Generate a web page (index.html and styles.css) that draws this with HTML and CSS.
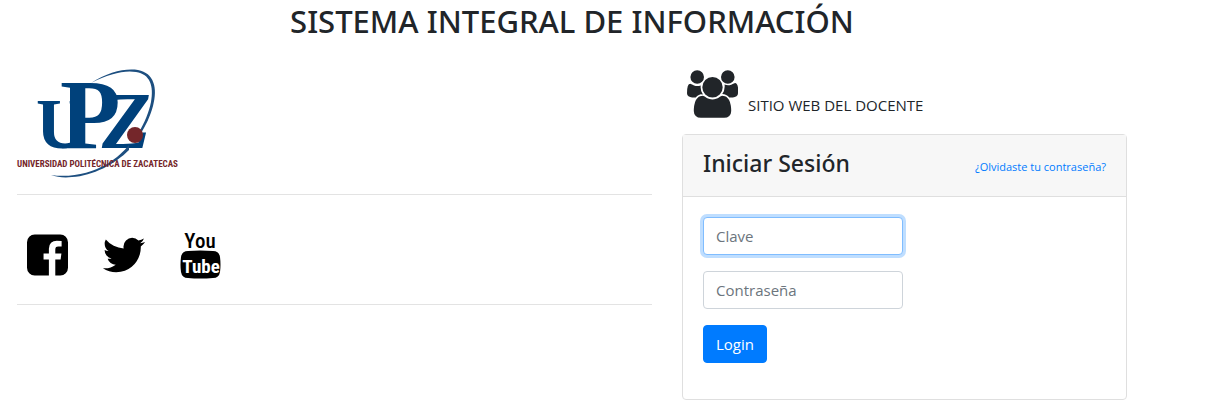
FILE: index.html
```html
<!DOCTYPE html>
<html lang="es">
<head>
  <meta charset="UTF-8">
  <meta name="viewport" content="width=device-width, initial-scale=1.0">
  <title>Sistema Integral de Información</title>
  <link rel="stylesheet" href="styles.css">
</head>
<body>
  <div class="container">
    <h2 class="title">SISTEMA INTEGRAL DE INFORMACIÓN</h2>
    <div class="row">
      <div class="col-left">
        <svg class="logo" viewBox="0 0 160 112" role="img" aria-label="Universidad Politécnica de Zacatecas">
          <g class="logo-letters">
            <text x="19" y="80" font-size="71">U</text>
            <path class="logo-gap" d="M60 20H90V76H60Z"/>
            <text x="43" y="80" font-size="99">P</text>
            <text x="85" y="80" font-size="80" font-style="italic">Z</text>
          </g>
          <path class="logo-orbit" d="M74 15C91 4 108 0 121 2C137 5 141 20 136 38C133 49 129 57 123 67L121 66C128 54 132 44 134 34C137 18 133 6 119 4C107 2 92 6 74 15Z"/>
          <path class="logo-orbit" d="M112 82C98 96 76 108 55 109C47 110 40 109 34 107C54 110 74 105 90 96C100 90 107 83 112 77Z"/>
          <circle class="logo-dot" cx="118" cy="67" r="8"/>
          <text class="logo-name" x="0" y="99">UNIVERSIDAD POLITÉCNICA DE ZACATECAS</text>
        </svg>
        <hr>
        <div class="social">
          <a href="#" aria-label="Facebook">
            <svg width="41" height="48" viewBox="0 0 1536 1792"><path d="M1248 128q119 0 203.500 84.500t84.500 203.500v960q0 119-84.500 203.500t-203.500 84.500h-188v-595h199l30-232h-229v-148q0-56 23.500-84t91.500-28l122-1v-207q-63-9-178-9-136 0-217.500 80t-81.500 226v171h-200v232h200v595h-532q-119 0-203.500-84.500t-84.500-203.500v-960q0-119 84.500-203.500t203.500-84.500h960z"/></svg>
          </a>
          <a href="#" aria-label="Twitter">
            <svg width="48" height="48" viewBox="0 0 1792 1792"><path d="M1684 408q-67 98-162 167 1 14 1 42 0 130-38 259.500t-115.500 248.500-184.500 210.500-258 146-323 54.500q-271 0-496-145 35 4 78 4 225 0 401-138-105-2-188-64.500t-114-159.500q33 5 61 5 43 0 85-11-112-23-185.500-111.500t-73.500-205.500v-4q68 38 146 41-66-44-105-115t-39-154q0-88 44-163 121 149 294.500 238.500t371.500 99.500q-8-38-8-74 0-134 94.500-228.500t228.500-94.500q140 0 236 102 109-21 205-78-37 115-142 178 93-10 186-50z"/></svg>
          </a>
          <a href="#" aria-label="YouTube">
            <svg class="youtube" width="41" height="48" viewBox="0 0 41 48">
              <text class="yt-you" x="20" y="17">You</text>
              <path d="M8 20Q20 19 33 20Q39 20 40 26Q41 34 40 41Q39 47 33 47Q20 48 8 47Q2 47 1 41Q0 34 1 26Q2 20 8 20Z"/>
              <text class="yt-tube" x="21" y="42">Tube</text>
            </svg>
          </a>
        </div>
        <hr>
      </div>
      <div class="col-right">
        <div class="site">
          <svg width="51" height="48" viewBox="0 0 1920 1792" aria-hidden="true"><path d="M593 896q-162 5-265 128h-134q-82 0-138-40.500t-56-118.500q0-353 124-353 6 0 43.500 21t97.500 42.500 119 21.500q67 0 133-23-5 37-5 66 0 159 92 287zm1071 637q0 120-73 189.500t-194 69.500h-874q-121 0-194-69.500t-73-189.500q0-53 3.500-103.500t14-109 26.500-108.500 43-97.500 62-81 85.500-53.500 111.500-20q10 0 43 21.500t73 48 107 48 135 21.500 135-21.500 107-48 73-48 43-21.500q61 0 111.500 20t85.500 53.500 62 81 43 97.500 26.500 108.500 14 109 3.500 103.500zm-1024-1277q0 106-75 181t-181 75-181-75-75-181 75-181 181-75 181 75 75 181zm704 384q0 159-112.500 271.500t-271.500 112.500-271.500-112.500-112.500-271.500 112.500-271.500 271.500-112.500 271.500 112.500 112.500 271.500zm576 225q0 78-56 118.500t-138 40.500h-134q-103-123-265-128 92-128 92-287 0-29-5-66 66 23 133 23 59 0 119-21.500t97.500-42.500 43.500-21q124 0 124 353zm-128-609q0 106-75 181t-181 75-181-75-75-181 75-181 181-75 181 75 75 181z"/></svg>
          <span>SITIO WEB DEL DOCENTE</span>
        </div>
        <div class="card">
          <div class="card-header">
            <h4>Iniciar Sesión</h4>
            <a href="#">¿Olvidaste tu contraseña?</a>
          </div>
          <form class="card-body">
            <input type="text" class="form-control" name="clave" placeholder="Clave" aria-label="Clave" autofocus>
            <input type="password" class="form-control" name="password" placeholder="Contraseña" aria-label="Contraseña">
            <button type="submit" class="btn">Login</button>
          </form>
        </div>
      </div>
    </div>
  </div>
</body>
</html>
```
FILE: styles.css
```css
* {
  box-sizing: border-box;
}
body {
  margin: 0;
  padding: 0 2px;
  font-family: "Segoe UI", "Open Sans", "Noto Sans", sans-serif;
  font-size: 15px;
  line-height: 24px;
  color: #212529;
  background: #fff;
}
.container {
  max-width: 1140px;
}
.title,
.card-header h4 {
  font-family: "Segoe UI", "Noto Sans", sans-serif;
  font-weight: 500;
}
.title {
  margin: 0 0 28px;
  padding-top: 2px;
  font-size: 31px;
  line-height: 38px;
  text-align: center;
}
.row {
  display: grid;
  grid-template-columns: 7fr 5fr;
}
.col-left,
.col-right {
  padding: 0 15px;
}
.logo {
  display: block;
  width: 160px;
  height: 112px;
  overflow: visible;
}
.logo-letters {
  fill: #00417b;
  font-family: "Liberation Serif", serif;
  font-weight: bold;
}
.logo-gap {
  fill: #fff;
}
.logo-orbit {
  fill: #1d4f80;
}
.logo-dot {
  fill: #74262a;
}
.logo-name {
  fill: #74262a;
  font-family: "Roboto Condensed", "Liberation Sans", sans-serif;
  font-size: 9px;
  font-weight: bold;
}
hr {
  margin: 14px 0 0;
  border: 0;
  border-top: 1px solid #e3e3e3;
}
.social {
  display: flex;
  align-items: center;
  gap: 32px;
  padding: 36px 10px 11px;
}
.social a {
  display: block;
  height: 48px;
  color: #000;
}
svg {
  fill: currentColor;
}
.youtube {
  overflow: visible;
}
.yt-you,
.yt-tube {
  font-family: "Roboto Condensed", "Liberation Sans", sans-serif;
  text-anchor: middle;
}
.yt-you {
  font-size: 21px;
  font-weight: 500;
}
.yt-tube {
  fill: #fff;
  font-size: 19px;
  font-weight: bold;
}
.site {
  display: flex;
  align-items: flex-end;
  gap: 10px;
  padding: 2px 5px 16px;
}
.site span {
  padding-bottom: 1px;
}
.card {
  border: 1px solid #dfdfdf;
  border-radius: 4px;
}
.card-header {
  display: flex;
  justify-content: space-between;
  padding: 12px 20px;
  background: #f7f7f7;
  border-bottom: 1px solid #dfdfdf;
}
.card-header h4 {
  margin: 0;
  padding-bottom: 5px;
  font-size: 23px;
  line-height: 32px;
}
.card-header a {
  padding-top: 8px;
  font-size: 11px;
  color: #007bff;
  text-decoration: none;
}
.card-body {
  display: flex;
  flex-direction: column;
  align-items: flex-start;
  gap: 16px;
  padding: 20px 20px 36px;
}
.form-control {
  width: 200px;
  height: 38px;
  padding: 6px 12px;
  font: inherit;
  color: #495057;
  background: #fff;
  border: 1px solid #ced4da;
  border-radius: 4px;
}
.form-control::placeholder {
  color: #6c757d;
}
.form-control:focus {
  outline: 0;
  border-color: #80bdff;
  box-shadow: 0 0 0 3px #bfdeff;
}
.btn {
  height: 38px;
  padding: 6px 12px;
  font: inherit;
  color: #fff;
  background: #007bff;
  border: 1px solid #007bff;
  border-radius: 4px;
  cursor: pointer;
}
```
